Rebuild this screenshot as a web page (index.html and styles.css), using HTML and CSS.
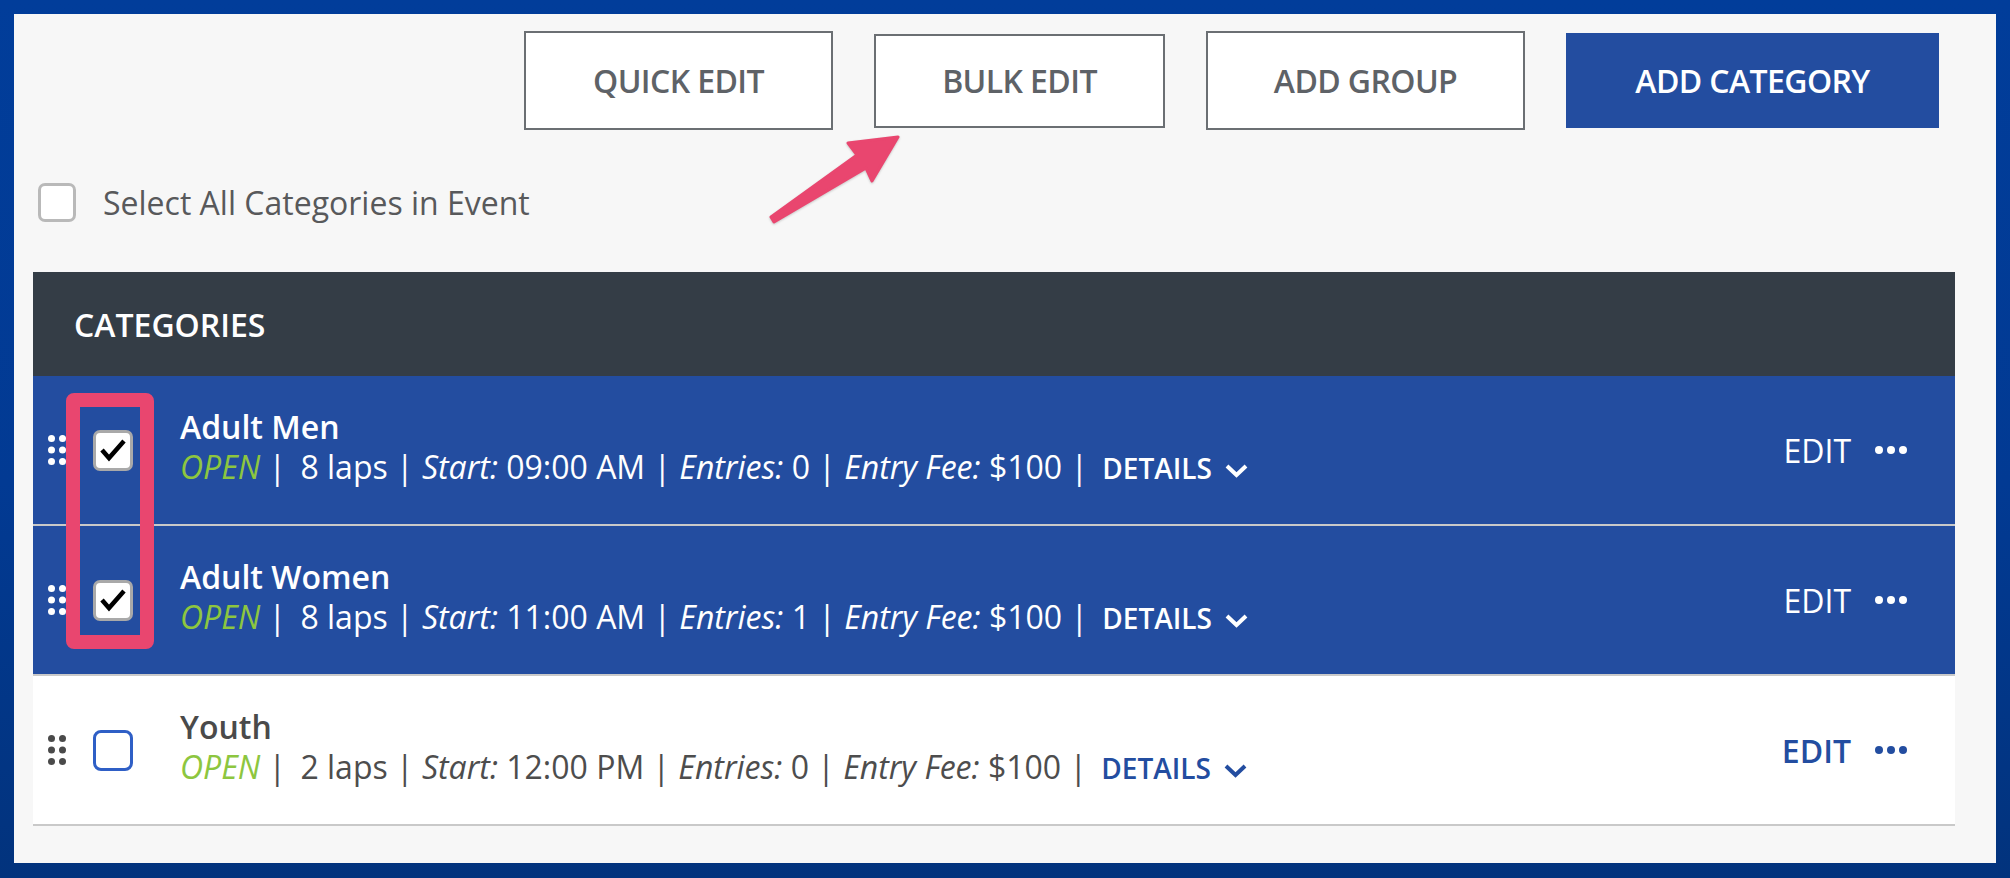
FILE: index.html
```html
<!DOCTYPE html>
<html lang="en">
<head>
<meta charset="utf-8">
<title>Categories</title>
<link rel="stylesheet" href="styles.css">
</head>
<body>
<div class="frame">
  <div class="page">
    <div class="toolbar">
      <button class="btn btn-outline btn-quick">QUICK EDIT</button>
      <button class="btn btn-outline btn-bulk">BULK EDIT</button>
      <button class="btn btn-outline btn-group">ADD GROUP</button>
      <button class="btn btn-primary btn-cat">ADD CATEGORY</button>
    </div>

    <label class="select-all"><span class="cb cb-all"></span>Select All Categories in Event</label>

    <div class="table">
      <div class="table-head">CATEGORIES</div>

      <div class="row row-selected">
        <svg class="handle" viewBox="0 0 18 30"><circle cx="3.5" cy="3.5" r="3.5"/><circle cx="14.5" cy="3.5" r="3.5"/><circle cx="3.5" cy="15" r="3.5"/><circle cx="14.5" cy="15" r="3.5"/><circle cx="3.5" cy="26.5" r="3.5"/><circle cx="14.5" cy="26.5" r="3.5"/></svg>
        <span class="cb cb-row cb-checked"><svg class="check" viewBox="0 0 34 35"><polyline points="6,17 13,25 28,8"/></svg></span>
        <div class="info">
          <div class="name">Adult Men</div>
          <div class="meta"><span class="status">OPEN</span> | <span class="lead">8 laps</span> | <i>Start:</i> 09:00 AM | <i>Entries:</i> 0 | <i>Entry Fee:</i> $100 | <a class="details">DETAILS<svg class="chev" viewBox="0 0 23 14"><polyline points="2,2 11.5,11 21,2"/></svg></a></div>
        </div>
        <div class="actions">
          <span class="edit">EDIT</span>
          <svg class="more" viewBox="0 0 32 8"><circle cx="4" cy="4" r="4"/><circle cx="16" cy="4" r="4"/><circle cx="28" cy="4" r="4"/></svg>
        </div>
      </div>

      <div class="row row-selected">
        <svg class="handle" viewBox="0 0 18 30"><circle cx="3.5" cy="3.5" r="3.5"/><circle cx="14.5" cy="3.5" r="3.5"/><circle cx="3.5" cy="15" r="3.5"/><circle cx="14.5" cy="15" r="3.5"/><circle cx="3.5" cy="26.5" r="3.5"/><circle cx="14.5" cy="26.5" r="3.5"/></svg>
        <span class="cb cb-row cb-checked"><svg class="check" viewBox="0 0 34 35"><polyline points="6,17 13,25 28,8"/></svg></span>
        <div class="info">
          <div class="name">Adult Women</div>
          <div class="meta"><span class="status">OPEN</span> | <span class="lead">8 laps</span> | <i>Start:</i> 11:00 AM | <i>Entries:</i> 1 | <i>Entry Fee:</i> $100 | <a class="details">DETAILS<svg class="chev" viewBox="0 0 23 14"><polyline points="2,2 11.5,11 21,2"/></svg></a></div>
        </div>
        <div class="actions">
          <span class="edit">EDIT</span>
          <svg class="more" viewBox="0 0 32 8"><circle cx="4" cy="4" r="4"/><circle cx="16" cy="4" r="4"/><circle cx="28" cy="4" r="4"/></svg>
        </div>
      </div>

      <div class="row">
        <svg class="handle" viewBox="0 0 18 30"><circle cx="3.5" cy="3.5" r="3.5"/><circle cx="14.5" cy="3.5" r="3.5"/><circle cx="3.5" cy="15" r="3.5"/><circle cx="14.5" cy="15" r="3.5"/><circle cx="3.5" cy="26.5" r="3.5"/><circle cx="14.5" cy="26.5" r="3.5"/></svg>
        <span class="cb cb-row cb-empty"></span>
        <div class="info">
          <div class="name">Youth</div>
          <div class="meta"><span class="status">OPEN</span> | <span class="lead">2 laps</span> | <i>Start:</i> 12:00 PM | <i>Entries:</i> 0 | <i>Entry Fee:</i> $100 | <a class="details">DETAILS<svg class="chev" viewBox="0 0 23 14"><polyline points="2,2 11.5,11 21,2"/></svg></a></div>
        </div>
        <div class="actions">
          <span class="edit">EDIT</span>
          <svg class="more" viewBox="0 0 32 8"><circle cx="4" cy="4" r="4"/><circle cx="16" cy="4" r="4"/><circle cx="28" cy="4" r="4"/></svg>
        </div>
      </div>
    </div>
  </div>

  <div class="annot-box"></div>
  <svg class="annot-arrow" viewBox="760 120 150 110">
    <path d="M898 137 L848 143 L857 155 L771 217 L774 222 L866 168 L872 181 Z"/>
  </svg>
</div>
</body>
</html>
```

FILE: styles.css
```css
html, body {
  margin: 0;
  padding: 0;
}

body {
  font-family: "Open Sans", "DejaVu Sans", sans-serif;
  background: #023b96;
}

.frame {
  position: relative;
  width: 2010px;
  height: 878px;
  box-sizing: border-box;
  padding: 14px 14px 15px 14px;
  background: linear-gradient(180deg, #013d9a 0%, #023a93 55%, #02337d 100%);
}

.page {
  height: 100%;
  background: #f7f7f7;
}

/* toolbar */
.toolbar {
  display: flex;
  justify-content: flex-end;
  align-items: center;
  gap: 41px;
  height: 99px;
  padding: 17px 57px 0 0;
}

.btn {
  box-sizing: border-box;
  display: flex;
  align-items: center;
  justify-content: center;
  padding: 0;
  margin: 0;
  font-family: "Open Sans", sans-serif;
  font-size: 32px;
  font-weight: 600;
  letter-spacing: -0.6px;
  cursor: pointer;
}

.btn-outline {
  background: #ffffff;
  border: 2px solid #6b6f73;
  color: #5e6267;
}

.btn-primary {
  background: #234da0;
  border: 0;
  color: #ffffff;
}

.btn-quick { width: 309px; height: 99px; }
.btn-bulk  { width: 291px; height: 94px; }
.btn-group { width: 319px; height: 99px; }
.btn-cat   { width: 373px; height: 95px; }

/* select all */
.select-all {
  display: flex;
  align-items: center;
  gap: 27px;
  height: 40px;
  margin: 52px 0 0 24px;
  font-size: 32px;
  color: #58595b;
}

.cb {
  box-sizing: border-box;
  display: inline-flex;
  align-items: center;
  justify-content: center;
  background: #ffffff;
  flex: none;
}

.cb-all {
  width: 38px;
  height: 39px;
  border: 3px solid #b9b9b9;
  border-radius: 7px;
}

/* table */
.table {
  margin: 50px 41px 0 19px;
}

.table-head {
  height: 104px;
  display: flex;
  align-items: center;
  padding-left: 41px;
  background: #343d46;
  color: #ffffff;
  font-size: 32px;
  font-weight: 600;
}

.row {
  height: 148px;
  display: flex;
  align-items: center;
  padding: 0 48px 0 15px;
  border-bottom: 2px solid #c9c9c9;
  background: #ffffff;
  color: #4d4d4d;
}

.row-selected {
  background: #234da0;
  color: #ffffff;
}

.handle {
  width: 18px;
  height: 30px;
  flex: none;
  fill: #4a4a4a;
}

.row-selected .handle {
  fill: #ffffff;
}

.cb-row {
  width: 40px;
  height: 41px;
  margin-left: 27px;
  border-radius: 7px;
}

.cb-checked {
  border: 3px solid #a9a9a9;
}

.cb-empty {
  border: 3px solid #2f5fc6;
  border-radius: 8px;
}

.check {
  width: 34px;
  height: 35px;
  fill: none;
  stroke: #000000;
  stroke-width: 4.5;
  stroke-linejoin: miter;
}

.info {
  margin-left: 47px;
  padding-bottom: 5px;
  line-height: 40px;
  font-size: 32px;
}

.name {
  font-weight: 600;
}

.row .name {
  color: #4a4a4a;
}

.row-selected .name {
  color: #ffffff;
}

.meta {
  white-space: nowrap;
  font-weight: 400;
}

.meta i {
  font-style: italic;
}

.lead {
  margin-left: 6px;
}

.status {
  color: #8dc63f;
  font-style: italic;
}

.details {
  display: inline-flex;
  align-items: center;
  margin-left: 6px;
  font-size: 28px;
  font-weight: 600;
  color: #234da0;
}

.row-selected .details {
  color: #ffffff;
}

.chev {
  width: 23px;
  height: 14px;
  margin-left: 13px;
  margin-top: 6px;
  fill: none;
  stroke: currentColor;
  stroke-width: 4;
}

.actions {
  margin-left: auto;
  display: flex;
  align-items: center;
  gap: 24px;
}

.edit {
  font-size: 32px;
  font-weight: 600;
  color: #234da0;
}

.row-selected .edit {
  font-weight: 400;
  color: #ffffff;
}

.more {
  width: 32px;
  height: 8px;
  fill: #234da0;
}

.row-selected .more {
  fill: #ffffff;
}

/* annotations */
.annot-box {
  position: absolute;
  left: 66px;
  top: 393px;
  width: 88px;
  height: 256px;
  box-sizing: border-box;
  border: 14px solid #e9466f;
  border-radius: 8px;
}

.annot-arrow {
  position: absolute;
  left: 760px;
  top: 120px;
  width: 150px;
  height: 110px;
  fill: #e9466f;
  stroke: #e9466f;
  stroke-width: 3;
  stroke-linejoin: round;
  filter: drop-shadow(0 1px 1px rgba(0, 0, 0, 0.2));
}
```
